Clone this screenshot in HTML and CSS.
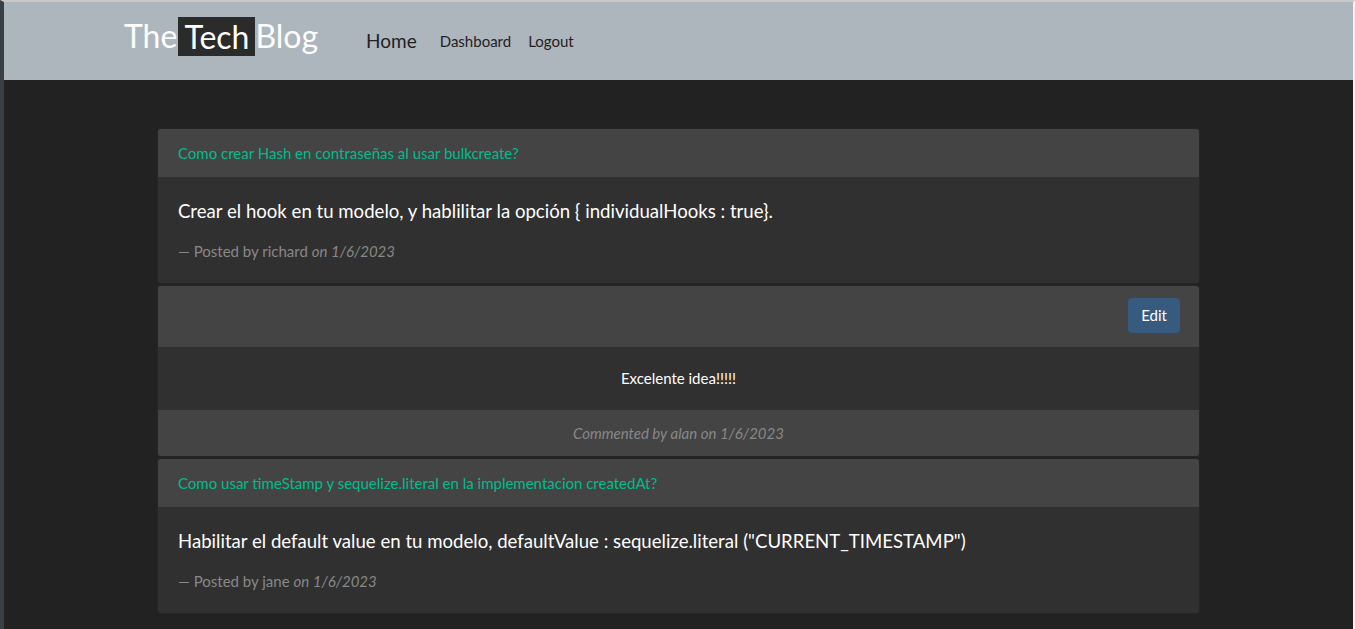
FILE: index.html
```html
<!DOCTYPE html>
<html lang="es">
<head>
<meta charset="utf-8">
<title>The Tech Blog</title>
<link rel="stylesheet" href="styles.css">
</head>
<body>
<header class="navbar">
  <a class="brand" href="#">The<span class="hl">Tech</span>Blog</a>
  <nav class="nav">
    <a class="nav-home" href="#">Home</a>
    <a class="nav-link" href="#">Dashboard</a>
    <a class="nav-link" href="#">Logout</a>
  </nav>
</header>
<main class="content">
  <article class="card">
    <div class="card-header"><a class="post-link" href="#">Como crear Hash en contraseñas al usar bulkcreate?</a></div>
    <div class="card-body">
      <h5 class="post-title">Crear el hook en tu modelo, y hablilitar la opción { individualHooks : true}.</h5>
      <p class="meta">— Posted by richard <em>on 1/6/2023</em></p>
    </div>
  </article>
  <article class="card">
    <div class="card-header header-actions"><button class="btn" type="button">Edit</button></div>
    <div class="comment-body">Excelente idea!!!!!</div>
    <div class="comment-footer">Commented by alan on 1/6/2023</div>
  </article>
  <article class="card">
    <div class="card-header"><a class="post-link" href="#">Como usar timeStamp y sequelize.literal en la implementacion createdAt?</a></div>
    <div class="card-body">
      <h5 class="post-title">Habilitar el default value en tu modelo, defaultValue : sequelize.literal ("CURRENT_TIMESTAMP")</h5>
      <p class="meta">— Posted by jane <em>on 1/6/2023</em></p>
    </div>
  </article>
</main>
</body>
</html>
```

FILE: styles.css
```css
* { box-sizing: border-box; }
html, body { height: 100%; }
body {
  margin: 0;
  background: #222;
  border-top: 2px solid #c7c7c7;
  border-left: 4px solid #3a3f46;
  border-right: 2px solid #f2f2f2;
  font-family: Lato, "Open Sans", sans-serif;
  font-size: 15px;
  line-height: 1.5;
  color: #fff;
  overflow: hidden;
}
.navbar {
  height: 78px;
  background: #adb5bd;
  display: flex;
  align-items: center;
  padding-left: 120px;
}
.brand {
  font-size: 32px;
  line-height: 1.2;
  color: #fff;
  text-decoration: none;
  display: flex;
  align-items: center;
  margin-bottom: 9px;
}
.hl {
  background: #2b2b2b;
  margin: 0 0 0 1px;
  padding: 0 6px;
  line-height: 39px;
}
.nav {
  display: flex;
  align-items: center;
  margin-left: 48px;
  gap: 17px;
}
.nav a { color: #222; text-decoration: none; }
.nav-home { font-size: 19px; margin-right: 6px; }
.nav-link { font-size: 15px; }
.content {
  width: 1043px;
  margin: 48px auto 0;
}
.card {
  background: #303030;
  border: 1px solid rgba(0,0,0,0.2);
  border-radius: 4px;
  margin-bottom: 1px;
  overflow: hidden;
}
.card-header {
  background: #444;
  padding: 12px 20px;
  min-height: 48px;
  display: flex;
  align-items: center;
}
.post-link { color: #00bc8c; text-decoration: none; }
.header-actions {
  justify-content: flex-end;
  padding: 12px 19px 14px;
  min-height: 61px;
}
.btn {
  background: #375a7f;
  color: #fff;
  border: 0;
  border-radius: 4px;
  font-family: inherit;
  font-size: 15px;
  line-height: 23px;
  padding: 6px 13px;
  cursor: pointer;
}
.card-body { padding: 23px 20px 20px; min-height: 106px; }
.post-title {
  margin: 0 0 18px;
  font-size: 18.6px;
  font-weight: 400;
  line-height: 1.2;
}
.meta { margin: 0; color: #888; }
.comment-body {
  display: flex;
  align-items: center;
  justify-content: center;
  padding: 0 20px;
  height: 63px;
}
.comment-footer {
  background: #444;
  display: flex;
  align-items: center;
  justify-content: center;
  font-style: italic;
  color: #888;
  padding: 0 20px;
  height: 46px;
}
```
